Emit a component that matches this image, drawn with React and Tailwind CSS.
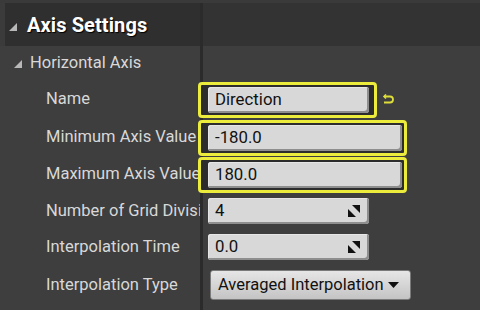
import React from 'react';

const font = { fontFamily: 'Roboto, "Noto Sans", sans-serif' };

function Caret({ className }) {
  return (
    <svg width="8" height="8" viewBox="0 0 8 8" className={className}>
      <polygon points="8,0 8,8 0,8" fill="#b8b8b8" />
    </svg>
  );
}

function Spinner() {
  return (
    <svg width="14" height="14" viewBox="0 0 14 14">
      <polygon points="5,1 13,1 13,9" fill="#111" />
      <polygon points="1,5 1,13 9,13" fill="#111" />
    </svg>
  );
}

function ResetIcon() {
  return (
    <svg width="13" height="11" viewBox="0 0 13 11">
      <path d="M2 2.5 H8 A3 3 0 0 1 8 8.5 H2" fill="none" stroke="#dede3a" strokeWidth="1.8" />
      <path d="M4 0.5 L2 2.5 L4 4.5" fill="none" stroke="#dede3a" strokeWidth="1.6" />
    </svg>
  );
}

function Field({ value, width, spin }) {
  return (
    <div
      className={`h-[26px] ${width} rounded-[3px] bg-[#d8d8d8] flex items-center justify-between pl-[7px] pr-[8px] text-[16.8px] text-[#111] shadow-[inset_-2px_-2px_0_#8e8e8e,inset_1px_1px_0_#e6e6e6]`}
    >
      <span>{value}</span>
      {spin && <Spinner />}
    </div>
  );
}

function Highlight({ children, width }) {
  return (
    <div className={`${width} h-[36px] rounded-[4px] border-[3px] border-[#ecec3c] bg-[#2c2c2c] flex items-center pl-[7px] pr-[2px]`}>
      {children}
    </div>
  );
}

function Divider() {
  return <div className="w-[3px] shrink-0 bg-[#2b2b2b]" />;
}

function Row({ label, height, children }) {
  return (
    <div className={`flex ${height}`}>
      <div className="w-[200px] shrink-0 flex items-center pl-[46px] overflow-hidden whitespace-nowrap text-[16.5px] text-[#d8d8d8]">
        {label}
      </div>
      <Divider />
      <div className="flex-1 flex items-center">{children}</div>
    </div>
  );
}

export default function App() {
  return (
    <div className="w-[480px] h-[310px] bg-[#3e3e3e] overflow-hidden" style={font}>
      <div className="h-[3px] bg-[#3a3a3a]" />
      {/* header */}
      <div className="flex h-[43px]">
        <div className="w-[5px] bg-[#3b3b3b]" />
        <div className="w-[195px] bg-[#2f2f2f] flex items-center pl-[4px] gap-[10px]">
          <Caret className="mt-[4px]" />
          <span className="text-[20px] font-bold text-white tracking-[0.1px] [text-shadow:1px_1px_1px_#000]">
            Axis Settings
          </span>
        </div>
        <Divider />
        <div className="flex-1 bg-[#333333]" />
      </div>

      <div className="flex h-[34px]">
        <div className="w-[200px] shrink-0 flex items-center pl-[14px] gap-[8px] text-[16.5px] text-[#d8d8d8]">
          <Caret className="mt-[2px]" />
          <span>Horizontal Axis</span>
        </div>
        <Divider />
        <div className="flex-1" />
      </div>

      <Row label="Name" height="h-[39px]">
        <div className="flex items-center gap-[5px] -ml-[5px]">
          <Highlight width="w-[179px]">
            <Field value="Direction" width="w-[161px]" />
          </Highlight>
          <ResetIcon />
        </div>
      </Row>

      <Row label="Minimum Axis Value" height="h-[37px]">
        <div className="-ml-[5px]">
          <Highlight width="w-[209px]">
            <Field value="-180.0" width="w-[194px]" />
          </Highlight>
        </div>
      </Row>

      <Row label="Maximum Axis Value" height="h-[37px]">
        <div className="-ml-[5px]">
          <Highlight width="w-[209px]">
            <Field value="180.0" width="w-[194px]" />
          </Highlight>
        </div>
      </Row>

      <Row label="Number of Grid Divisions" height="h-[36px]">
        <div className="pl-[5px]">
          <Field value="4" width="w-[161px]" spin />
        </div>
      </Row>

      <Row label="Interpolation Time" height="h-[36px]">
        <div className="pl-[5px]">
          <Field value="0.0" width="w-[161px]" spin />
        </div>
      </Row>

      <Row label="Interpolation Type" height="h-[40px]">
        <div className="pl-[7px]">
          <div className="w-[201px] h-[30px] rounded-[3px] border border-[#7a7a7a] bg-gradient-to-b from-[#e6e6e6] to-[#c4c4c4] flex items-center pl-[7px] gap-[4px] text-[16.5px] text-[#111] whitespace-nowrap">
            <span>Averaged Interpolation</span>
            <svg width="11" height="6" viewBox="0 0 11 6" className="shrink-0">
              <polygon points="0,0 11,0 5.5,6" fill="#111" />
            </svg>
          </div>
        </div>
      </Row>
      <div className="flex h-[10px]">
        <div className="w-[200px]" />
        <Divider />
      </div>
    </div>
  );
}
